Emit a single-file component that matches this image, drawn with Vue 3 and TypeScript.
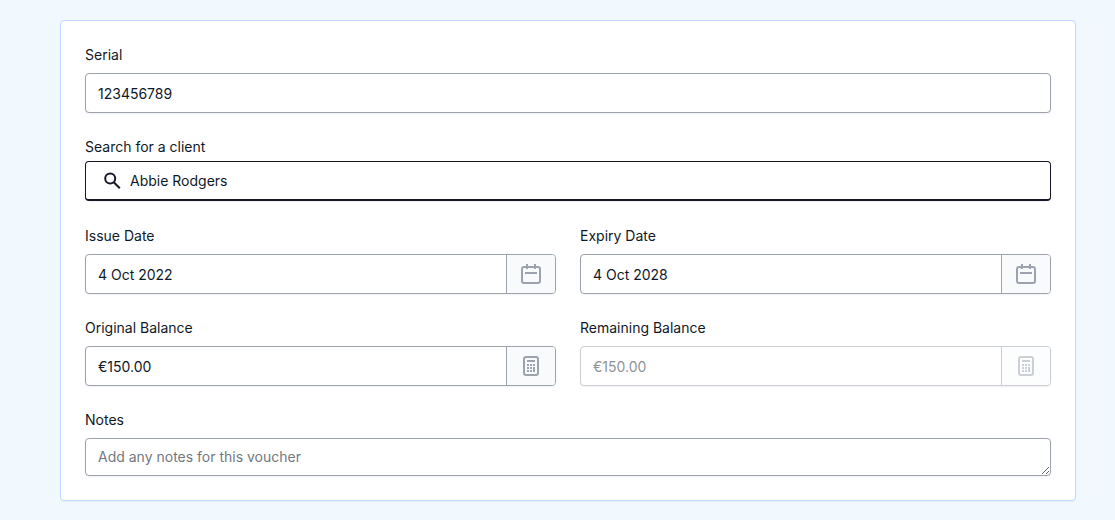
<script setup lang="ts">
import { ref } from 'vue'

const serial = ref('123456789')
const client = ref('Abbie Rodgers')
const issueDate = ref('4 Oct 2022')
const expiryDate = ref('4 Oct 2028')
const originalBalance = ref('€150.00')
const remainingBalance = ref('€150.00')
const notes = ref('')
</script>

<template>
  <main class="page">
    <form class="card" @submit.prevent>
      <div class="field">
        <label for="serial">Serial</label>
        <input id="serial" v-model="serial" class="control" type="text" />
      </div>

      <div class="field field-search">
        <label for="client">Search for a client</label>
        <div class="control search">
          <svg class="search-icon" viewBox="0 0 18 19" aria-hidden="true">
            <circle cx="6.2" cy="7.6" r="5" />
            <path d="M9.8 11.2L15.8 17.2" />
          </svg>
          <input id="client" v-model="client" type="text" />
        </div>
      </div>

      <div class="row">
        <div class="field">
          <label for="issue">Issue Date</label>
          <div class="control group">
            <input id="issue" v-model="issueDate" type="text" />
            <button type="button" aria-label="Pick issue date">
              <svg class="icon" viewBox="0 0 20 20" aria-hidden="true">
                <rect x="1" y="3" width="18" height="16" rx="2" />
                <path d="M6 0v5M14 0v5M4 9h12" />
              </svg>
            </button>
          </div>
        </div>
        <div class="field">
          <label for="expiry">Expiry Date</label>
          <div class="control group">
            <input id="expiry" v-model="expiryDate" type="text" />
            <button type="button" aria-label="Pick expiry date">
              <svg class="icon" viewBox="0 0 20 20" aria-hidden="true">
                <rect x="1" y="3" width="18" height="16" rx="2" />
                <path d="M6 0v5M14 0v5M4 9h12" />
              </svg>
            </button>
          </div>
        </div>
      </div>

      <div class="row">
        <div class="field">
          <label for="original">Original Balance</label>
          <div class="control group">
            <input id="original" v-model="originalBalance" type="text" />
            <button type="button" aria-label="Calculate original balance">
              <svg class="icon" viewBox="0 0 20 20" aria-hidden="true">
                <rect x="3" y="1" width="14" height="18" rx="2" />
                <path d="M6 5h8" />
                <path class="keys" d="M6 8h2v2H6zM9 8h2v2H9zM12 8h2v2h-2zM6 11h2v2H6zM9 11h2v2H9zM12 11h2v5h-2zM6 14h2v2H6zM9 14h2v2H9z" />
              </svg>
            </button>
          </div>
        </div>
        <div class="field">
          <label for="remaining">Remaining Balance</label>
          <div class="control group disabled">
            <input id="remaining" v-model="remainingBalance" type="text" disabled />
            <button type="button" aria-label="Calculate remaining balance" disabled>
              <svg class="icon" viewBox="0 0 20 20" aria-hidden="true">
                <rect x="3" y="1" width="14" height="18" rx="2" />
                <path d="M6 5h8" />
                <path class="keys" d="M6 8h2v2H6zM9 8h2v2H9zM12 8h2v2h-2zM6 11h2v2H6zM9 11h2v2H9zM12 11h2v5h-2zM6 14h2v2H6zM9 14h2v2H9z" />
              </svg>
            </button>
          </div>
        </div>
      </div>

      <div class="field">
        <label for="notes">Notes</label>
        <textarea id="notes" v-model="notes" class="control" rows="1" placeholder="Add any notes for this voucher"></textarea>
      </div>
    </form>
  </main>
</template>

<style>
body {
  margin: 0;
  background: #f1f9ff;
}
</style>

<style scoped>
.page {
  padding: 20px 39px 19px 60px;
  font-family: Inter, "Liberation Sans", sans-serif;
  font-size: 14px;
  line-height: 20px;
  color: #101928;
}

.page *,
.page *::before {
  box-sizing: border-box;
}

.card {
  display: flex;
  flex-direction: column;
  gap: 24px;
  padding: 24px;
  background: #fff;
  border: 1px solid #bfdbfe;
  border-radius: 4px;
  box-shadow: 0 1px 2px rgba(0, 0, 0, 0.05);
}

.row {
  display: grid;
  grid-template-columns: 1fr 1fr;
  gap: 24px;
}

.field {
  display: flex;
  flex-direction: column;
  gap: 8px;
  min-width: 0;
}

.field-search {
  gap: 4px;
  padding-bottom: 1px;
}

input,
textarea,
button {
  margin: 0;
  font: inherit;
  color: inherit;
}

input,
textarea {
  min-width: 0;
  outline: 0;
}

.control {
  width: 100%;
  height: 40px;
  padding: 0 12px;
  background: #fff;
  border: 1px solid #9ca3af;
  border-radius: 4px;
  box-shadow: 0 1px 2px rgba(0, 0, 0, 0.06);
}

.search {
  display: flex;
  align-items: center;
  gap: 8px;
  padding: 0 18px;
  border-color: #161827;
  border-bottom-width: 2px;
}

.search input,
.group input {
  flex: 1;
  height: 100%;
  padding: 0;
  border: 0;
  background: transparent;
}

.search-icon {
  width: 18px;
  height: 19px;
  fill: none;
  stroke: #161827;
  stroke-width: 2;
}

.group {
  display: flex;
  padding: 0;
  overflow: hidden;
}

.group input {
  padding: 0 12px;
}

.group button {
  display: flex;
  align-items: center;
  justify-content: center;
  width: 49px;
  padding: 0;
  color: #9ca3af;
  background: #f9fafb;
  border: 0;
  border-left: 1px solid #9ca3af;
}

.icon {
  width: 20px;
  height: 20px;
  fill: none;
  stroke: currentColor;
  stroke-width: 2;
}

.keys {
  fill: currentColor;
  stroke: none;
}

.disabled {
  border-color: #cbced5;
}

.disabled input {
  color: #919397;
}

.disabled button {
  color: #cdcfd6;
  background: #fcfdfd;
  border-left-color: #cbced5;
}

textarea {
  display: block;
  resize: vertical;
}

textarea.control {
  height: 38px;
  padding: 8px 12px;
}

textarea::placeholder {
  color: #737880;
  opacity: 1;
}
</style>
